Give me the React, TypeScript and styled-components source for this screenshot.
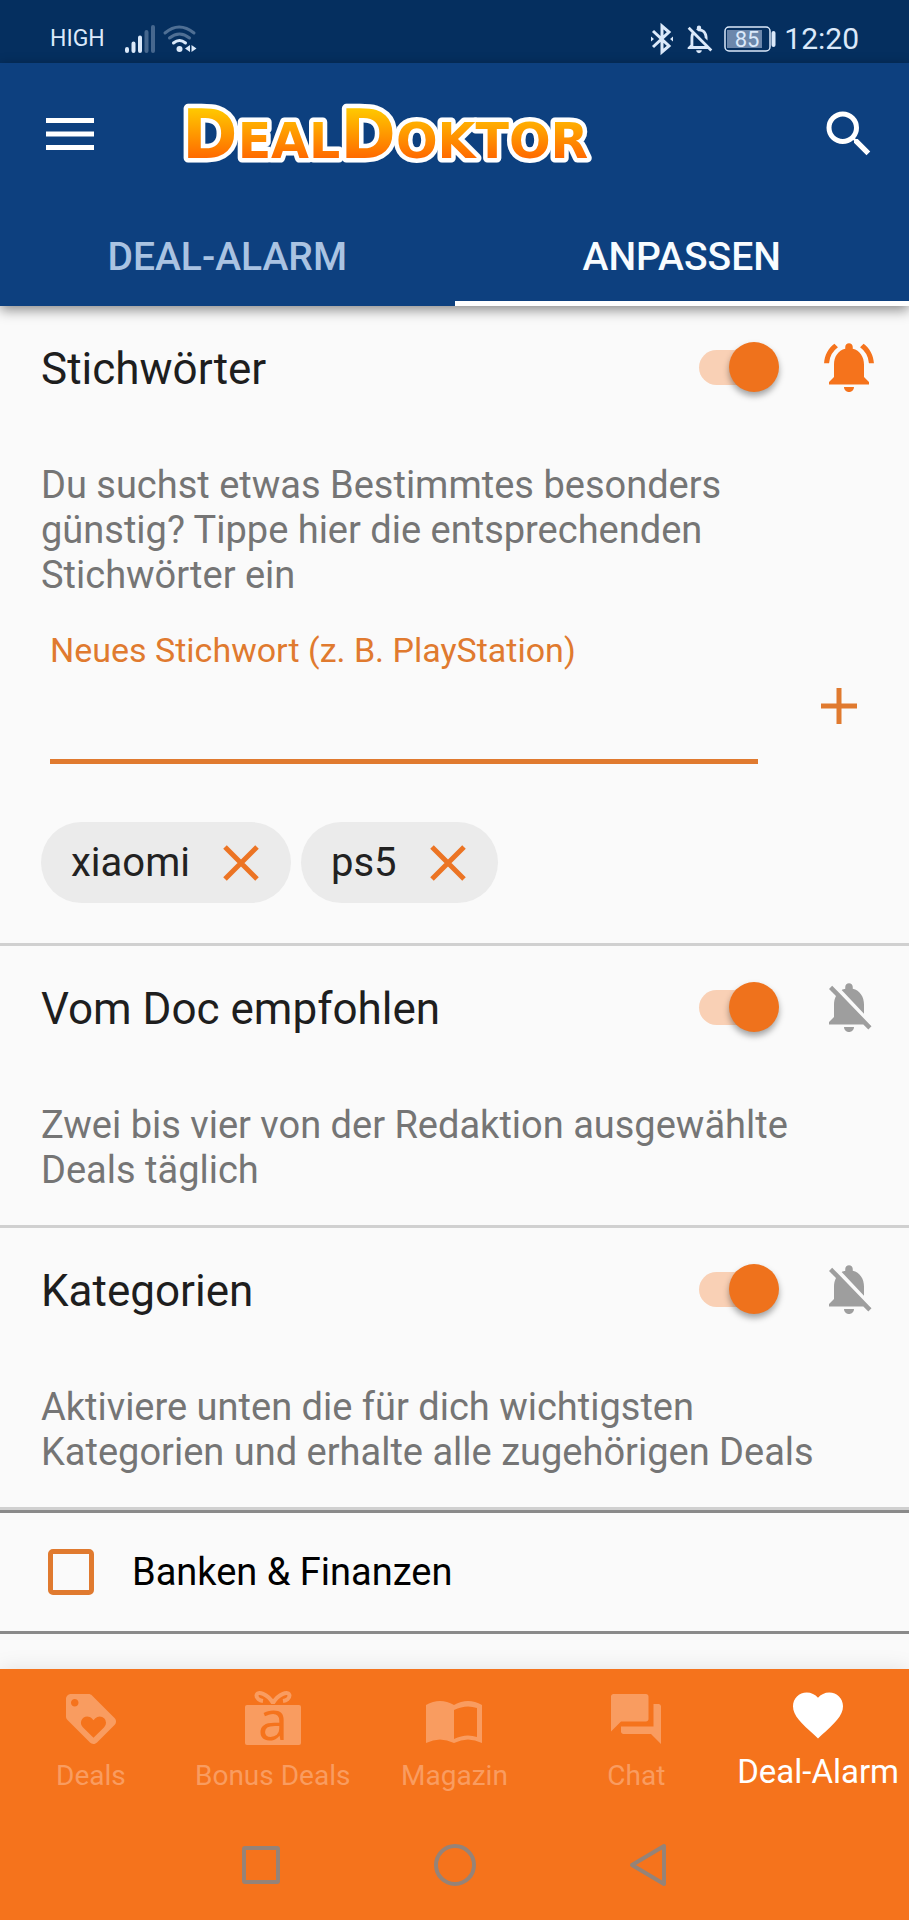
import React, { useState } from 'react';
import styled, { createGlobalStyle } from 'styled-components';
import {
  MdFavorite,
  MdForum,
  MdLoyalty,
  MdNotificationsActive,
  MdNotificationsOff,
  MdOutlineNotificationsOff,
  MdSearch,
} from 'react-icons/md';

const color = {
  blue: '#0d407f',
  blueDark: '#052f5f',
  orange: '#f5731c',
  accent: '#e07a2f',
  toggle: '#ef721c',
  page: '#fafafa',
  title: '#1e1e1e',
  muted: '#757575',
  line: '#d0d0d0',
};

const GlobalStyle = createGlobalStyle`
  * { box-sizing: border-box; }
  html, body, #root { height: 100%; }
  body { margin: 0; background: ${color.page}; font-family: Roboto, sans-serif; }
  button, input { font: inherit; color: inherit; }
  h2, p { margin: 0; font-weight: 400; }
  svg { display: block; flex: none; overflow: visible; }
`;

const Screen = styled.div`
  min-height: 100%;
  display: flex;
  flex-direction: column;
`;

const StatusBar = styled.div`
  display: flex;
  align-items: center;
  justify-content: space-between;
  height: 63px;
  padding: 14px 50px 0;
  background: ${color.blueDark};
  color: #dbe9fa;
`;

const StatusGroup = styled.div`
  display: flex;
  align-items: center;
  gap: 8px;
`;

const Carrier = styled.span`
  font-size: 23px;
  line-height: 28px;
  margin-right: 12px;
`;

const Clock = styled.span`
  font-size: 30px;
  line-height: 36px;
`;

const AppHeader = styled.header`
  position: relative;
  background: ${color.blue};
  box-shadow: 0 4px 12px rgba(0, 0, 0, 0.45);
`;

const Toolbar = styled.div`
  display: flex;
  align-items: center;
  height: 141px;
  padding: 0 30px 0 40px;
`;

const IconButton = styled.button<{ $tone?: string }>`
  display: flex;
  align-items: center;
  justify-content: center;
  flex: none;
  width: 60px;
  height: 60px;
  padding: 0;
  border: 0;
  background: none;
  color: ${(p) => p.$tone ?? '#fff'};
`;

const Logo = styled.svg`
  margin: 0 auto 0 76px;
  font-family: 'DejaVu Sans', sans-serif;
  font-weight: 700;
`;

const Tabs = styled.nav`
  display: grid;
  grid-template-columns: 1fr 1fr;
`;

const Tab = styled.button<{ $active?: boolean }>`
  height: 102px;
  padding: 10px 0 0;
  border: 0;
  border-bottom: 5px solid ${(p) => (p.$active ? '#fff' : 'transparent')};
  background: none;
  font-size: 39px;
  font-weight: 500;
  line-height: 45px;
  color: ${(p) => (p.$active ? '#f8fcff' : '#aac3e2')};
`;

const Main = styled.main`
  flex: 1;
  padding-bottom: 35px;
`;

const Section = styled.section`
  padding-bottom: 32px;
  border-bottom: 3px solid ${color.line};
`;

const SectionHead = styled.div`
  display: flex;
  align-items: center;
  gap: 40px;
  height: 122px;
  padding: 0 30px 0 41px;
`;

const Title = styled.h2`
  flex: 1;
  padding-top: 3px;
  font-size: 44px;
  line-height: 54px;
  color: ${color.title};
`;

const Switch = styled.input`
  appearance: none;
  position: relative;
  flex: none;
  width: 80px;
  height: 35px;
  margin: 0;
  border-radius: 18px;
  background: linear-gradient(to right, #f9d0b5 60px, transparent 60px);

  &::before {
    content: '';
    position: absolute;
    right: 0;
    top: -8px;
    width: 50px;
    height: 50px;
    border-radius: 50%;
    background: ${color.toggle};
    box-shadow: 0 4px 6px rgba(0, 0, 0, 0.35);
  }

  &:not(:checked)::before {
    right: 30px;
    background: #f1f1f1;
  }
`;

const Description = styled.p`
  padding: 35px 80px 0 41px;
  font-size: 38px;
  line-height: 45px;
  color: ${color.muted};
`;

const KeywordForm = styled.form`
  display: flex;
  align-items: flex-end;
  justify-content: space-between;
  padding: 32px 40px 0 50px;
`;

const KeywordField = styled.label`
  display: flex;
  flex-direction: column;
  flex: 1;
  max-width: 708px;
  font-size: 34px;
  line-height: 40px;
  color: ${color.accent};
`;

const KeywordInput = styled.input`
  width: 100%;
  height: 94px;
  padding: 30px 0 10px;
  border: 0;
  border-bottom: 5px solid ${color.accent};
  outline: 0;
  background: none;
  font-size: 38px;
`;

const AddButton = styled(IconButton)`
  margin-bottom: 28px;
`;

const Chips = styled.div`
  display: flex;
  gap: 10px;
  padding: 58px 41px 8px;
`;

const Chip = styled.div`
  display: flex;
  align-items: center;
  gap: 21px;
  height: 81px;
  padding: 0 20px 0 30px;
  border-radius: 41px;
  background: #ebebeb;
  font-size: 40px;
  line-height: 46px;
  color: #222;
`;

const ChipRemove = styled.button`
  display: flex;
  align-items: center;
  justify-content: center;
  width: 60px;
  height: 60px;
  padding: 0;
  border: 0;
  background: none;
  color: #ec7424;
`;

const CategoryRow = styled.label`
  display: flex;
  align-items: center;
  gap: 38px;
  height: 124px;
  padding: 0 48px;
  border: solid #8a8a8a;
  border-width: 3px 0;
  font-size: 38px;
  line-height: 45px;
  color: #000;
`;

const Checkbox = styled.input`
  appearance: none;
  width: 46px;
  height: 46px;
  margin: 0;
  border: 5px solid ${color.accent};
  border-radius: 5px;

  &:checked {
    background: ${color.accent};
  }
`;

const BottomBar = styled.footer`
  position: sticky;
  bottom: 0;
  background: ${color.orange};
  box-shadow: 0 0 20px rgba(0, 0, 0, 0.1);
`;

const BottomNav = styled.nav`
  display: grid;
  grid-template-columns: repeat(5, minmax(0, 1fr));
  height: 141px;
`;

const NavLink = styled.a<{ $active?: boolean }>`
  display: flex;
  flex-direction: column;
  align-items: center;
  gap: 8px;
  padding-top: ${(p) => (p.$active ? 16 : 20)}px;
  font-size: ${(p) => (p.$active ? 33 : 28)}px;
  line-height: 38px;
  white-space: nowrap;
  text-decoration: none;
  color: ${(p) => (p.$active ? '#fff' : '#f99c60')};
`;

const SystemNav = styled.div`
  display: flex;
  justify-content: center;
  align-items: center;
  gap: 134px;
  height: 110px;
`;

const MenuIcon = () => (
  <svg width="48" height="32" viewBox="0 0 48 32" fill="#fff">
    <path d="M0 0h48v5H0zM0 13.500h48v5H0zM0 27h48v5H0z" />
  </svg>
);

const SignalIcon = () => (
  <svg width="30" height="28" viewBox="0 0 30 28" strokeWidth="4" strokeLinecap="round" stroke="currentColor">
    <path d="M2 24v2M8.500 18.500v7.500M15 12.500v13.500" />
    <path d="M21.500 7v19M28 2v24" opacity=".3" />
  </svg>
);

const WifiIcon = () => (
  <svg width="34" height="28" viewBox="0 0 34 28" fill="none" strokeWidth="3" strokeLinecap="round" stroke="currentColor">
    <path d="M2 8q14-12 29 0M6.500 13q10-8 20 0" opacity=".35" />
    <path d="M10.500 18q6-5 12 0" />
    <circle cx="16.500" cy="24" r="3" fill="currentColor" stroke="none" />
    <path d="M22 23.500l5-3.500v7zM33.500 23.500l-5-3.500v7z" fill="currentColor" stroke="none" />
  </svg>
);

const BluetoothIcon = () => (
  <svg width="24" height="30" viewBox="0 0 24 30" fill="none" stroke="currentColor" strokeWidth="3">
    <path d="M3 7l16 15-7 6V2l7 6L3 23" />
    <path d="M1 12.500l3 2.500-3 2.500zM23 12.500l-3 2.500 3 2.500z" fill="currentColor" stroke="none" />
  </svg>
);

const BatteryIcon = () => (
  <svg width="52" height="26" viewBox="0 0 52 26" fill="none">
    <rect x="1" y="1" width="45" height="24" rx="4" stroke="currentColor" strokeWidth="1.500" />
    <rect x="3" y="4" width="35" height="18" fill="#6c87ab" />
    <path d="M49.500 7v12" stroke="currentColor" strokeWidth="4" strokeLinecap="round" />
    <text x="23" y="21" textAnchor="middle" fontSize="22" fill="currentColor">
      85
    </text>
  </svg>
);

const GiftIcon = () => (
  <svg width="60" height="60" viewBox="0 0 60 60">
    <path
      d="M30 14C25 5 14 1 13.500 6.500c0 3 3 5 6.500 5.500M30 14C35 5 46 1 46.500 6.500c0 3-3 5-6.500 5.500"
      fill="none"
      stroke="currentColor"
      strokeWidth="4"
    />
    <rect x="2" y="16" width="56" height="40" rx="2" fill="currentColor" />
    <text x="30" y="51" textAnchor="middle" fontFamily="Open Sans" fontWeight="500" fontSize="54" fill={color.orange}>
      a
    </text>
  </svg>
);

const MagazineIcon = () => (
  <svg width="60" height="60" viewBox="0 0 60 60" fill="currentColor">
    <path d="M2 16q14-8 28 0v38q-14-7-28 0z" />
    <path d="M30 16q14-8 28 0v38q-14-7-28 0zM30 21v29q12-6 23-2V19q-11-4-23 2z" fillRule="evenodd" />
  </svg>
);

const DealDoktorLogo = () => (
  <Logo width="424" height="66" viewBox="0 0 424 66" role="img" aria-label="DealDoktor">
    <defs>
      <linearGradient id="logoFill" gradientUnits="userSpaceOnUse" x1="0" y1="8" x2="0" y2="57">
        <stop offset="0" stopColor="#ffc800" />
        <stop offset="1" stopColor="#ff6a00" />
      </linearGradient>
    </defs>
    <text
      x="6"
      y="57"
      fontSize="67"
      fill="url(#logoFill)"
      stroke="#fff"
      strokeWidth="9"
      strokeLinejoin="round"
      paintOrder="stroke"
    >
      D<tspan fontSize="49">EAL</tspan>D<tspan fontSize="49">OKTOR</tspan>
    </text>
  </Logo>
);

const CloseIcon = () => (
  <svg width="36" height="36" viewBox="0 0 36 36" stroke="currentColor" strokeWidth="5">
    <path d="M2 2l32 32M34 2L2 34" />
  </svg>
);

const PlusIcon = () => (
  <svg width="38" height="38" viewBox="0 0 38 38" stroke="currentColor" strokeWidth="5">
    <path d="M19 1v36M1 19h36" />
  </svg>
);

type AlarmSectionProps = {
  title: string;
  text: string;
  ringing?: boolean;
  children?: React.ReactNode;
};

const AlarmSection = ({ title, text, ringing, children }: AlarmSectionProps) => {
  const [on, setOn] = useState(true);
  return (
    <Section>
      <SectionHead>
        <Title>{title}</Title>
        <Switch type="checkbox" role="switch" aria-label={title} checked={on} onChange={() => setOn(!on)} />
        <IconButton type="button" aria-label="Benachrichtigung" $tone={ringing ? color.orange : '#9e9e9e'}>
          {ringing ? <MdNotificationsActive size={60} /> : <MdNotificationsOff size={60} />}
        </IconButton>
      </SectionHead>
      <Description>{text}</Description>
      {children}
    </Section>
  );
};

const navItems = [
  { label: 'Deals', icon: <MdLoyalty size={60} /> },
  { label: 'Bonus Deals', icon: <GiftIcon /> },
  { label: 'Magazin', icon: <MagazineIcon /> },
  { label: 'Chat', icon: <MdForum size={60} /> },
  { label: 'Deal-Alarm', icon: <MdFavorite size={60} />, active: true },
];

export default function App() {
  const [keywords, setKeywords] = useState(['xiaomi', 'ps5']);
  const [draft, setDraft] = useState('');

  const addKeyword = (e: React.FormEvent) => {
    e.preventDefault();
    const word = draft.trim();
    if (word && !keywords.includes(word)) setKeywords([...keywords, word]);
    setDraft('');
  };

  return (
    <Screen>
      <GlobalStyle />
      <StatusBar>
        <StatusGroup>
          <Carrier>HIGH</Carrier>
          <SignalIcon />
          <WifiIcon />
        </StatusGroup>
        <StatusGroup>
          <BluetoothIcon />
          <MdOutlineNotificationsOff size={34} />
          <BatteryIcon />
          <Clock>12:20</Clock>
        </StatusGroup>
      </StatusBar>

      <AppHeader>
        <Toolbar>
          <IconButton type="button" aria-label="Menü">
            <MenuIcon />
          </IconButton>
          <DealDoktorLogo />
          <IconButton type="button" aria-label="Suche">
            <MdSearch size={60} />
          </IconButton>
        </Toolbar>
        <Tabs>
          <Tab type="button">DEAL-ALARM</Tab>
          <Tab type="button" $active>ANPASSEN</Tab>
        </Tabs>
      </AppHeader>

      <Main>
        <AlarmSection
          title="Stichwörter"
          text="Du suchst etwas Bestimmtes besonders günstig? Tippe hier die entsprechenden Stichwörter ein"
          ringing
        >
          <KeywordForm onSubmit={addKeyword}>
            <KeywordField>
              Neues Stichwort (z. B. PlayStation)
              <KeywordInput type="text" value={draft} onChange={(e) => setDraft(e.target.value)} />
            </KeywordField>
            <AddButton type="submit" aria-label="Hinzufügen" $tone={color.accent}>
              <PlusIcon />
            </AddButton>
          </KeywordForm>
          <Chips>
            {keywords.map((word) => (
              <Chip key={word}>
                {word}
                <ChipRemove
                  type="button"
                  aria-label={`${word} entfernen`}
                  onClick={() => setKeywords(keywords.filter((k) => k !== word))}
                >
                  <CloseIcon />
                </ChipRemove>
              </Chip>
            ))}
          </Chips>
        </AlarmSection>
        <AlarmSection
          title="Vom Doc empfohlen"
          text="Zwei bis vier von der Redaktion ausgewählte Deals täglich"
        />
        <AlarmSection
          title="Kategorien"
          text="Aktiviere unten die für dich wichtigsten Kategorien und erhalte alle zugehörigen Deals"
        />
        <CategoryRow>
          <Checkbox type="checkbox" />
          Banken &amp; Finanzen
        </CategoryRow>
      </Main>

      <BottomBar>
        <BottomNav>
          {navItems.map((item) => (
            <NavLink key={item.label} href="#" $active={item.active}>
              {item.icon}
              {item.label}
            </NavLink>
          ))}
        </BottomNav>
        <SystemNav>
          <IconButton type="button" aria-label="Übersicht" $tone="#958378">
            <svg width="40" height="40" viewBox="0 0 40 40" fill="none" stroke="currentColor" strokeWidth="4">
              <rect x="3" y="3" width="34" height="34" rx="1" />
            </svg>
          </IconButton>
          <IconButton type="button" aria-label="Startseite" $tone="#958378">
            <svg width="44" height="44" viewBox="0 0 44 44" fill="none" stroke="currentColor" strokeWidth="4">
              <circle cx="22" cy="22" r="19" />
            </svg>
          </IconButton>
          <IconButton type="button" aria-label="Zurück" $tone="#958378">
            <svg width="44" height="44" viewBox="0 0 44 44" fill="none" stroke="currentColor" strokeWidth="4" strokeLinejoin="round">
              <path d="M37 3v38L5 22z" />
            </svg>
          </IconButton>
        </SystemNav>
      </BottomBar>
    </Screen>
  );
}
